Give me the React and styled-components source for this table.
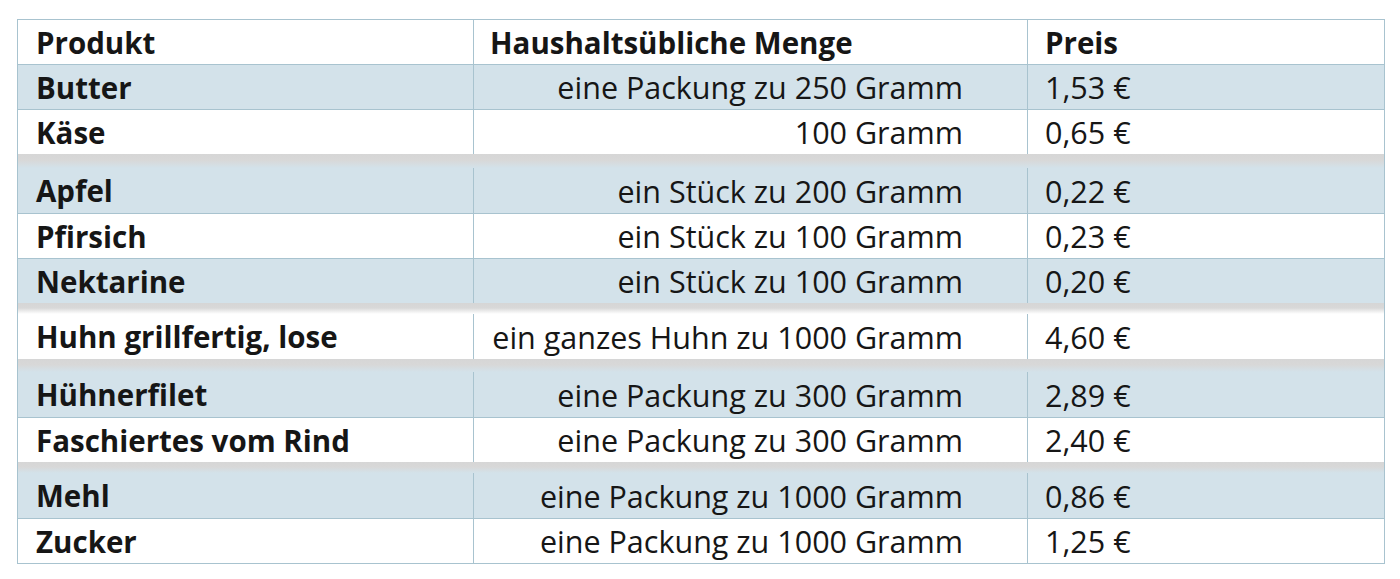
import React, { Fragment } from 'react';
import styled, { createGlobalStyle } from 'styled-components';

const COLORS = {
  BLUE: '#d3e2ea',
  WHITE: '#ffffff',
  LINE: '#a8c3cf',
  GAP: '#d6d6d6',
  TEXT: '#161616',
};

const GlobalStyle = createGlobalStyle`
  html, body {
    margin: 0;
    padding: 0;
    background: #ffffff;
  }
  body {
    font-family: "Open Sans", "Noto Sans", sans-serif;
    color: ${COLORS.TEXT};
  }
`

const Page = styled.div`
  padding: 19px 0 0 17px;
`
const Table = styled.div`
  width: 1368px;
  box-sizing: border-box;
  border: 1px solid ${COLORS.LINE};
  display: flex;
  flex-direction: column;
`
const Row = styled.div`
  display: grid;
  grid-template-columns: 455px 554px 1fr;
  height: ${(p) => (p.$head ? 44 : 45)}px;
  box-sizing: border-box;
  background: ${(p) => (p.$blue ? COLORS.BLUE : COLORS.WHITE)};
  border-top: ${(p) => (p.$ruled ? `1px solid ${COLORS.LINE}` : 'none')};
`
const Cell = styled.div`
  display: flex;
  align-items: center;
  justify-content: ${(p) => (p.$right ? 'flex-end' : 'flex-start')};
  padding: 2px ${(p) => (p.$right ? 64 : 0)}px 0 ${(p) => (p.$right ? 0 : p.$inset)}px;
  border-left: ${(p) => (p.$first ? 'none' : `1px solid ${COLORS.LINE}`)};
  font-size: ${(p) => (p.$bold ? 29.5 : 30.5)}px;
  font-weight: ${(p) => (p.$bold ? 700 : 400)};
  white-space: nowrap;
  line-height: 1.3;
`
const Gap = styled.div`
  height: ${(p) => p.$h}px;
  background: linear-gradient(
    ${COLORS.GAP} 0%,
    #d8d8d8 45%,
    ${(p) => (p.$blue ? COLORS.BLUE : COLORS.WHITE)} 100%
  );
`

const groups = [
  [
    ['Butter', 'eine Packung zu 250 Gramm', '1,53 €'],
    ['Käse', '100 Gramm', '0,65 €'],
  ],
  [
    ['Apfel', 'ein Stück zu 200 Gramm', '0,22 €'],
    ['Pfirsich', 'ein Stück zu 100 Gramm', '0,23 €'],
    ['Nektarine', 'ein Stück zu 100 Gramm', '0,20 €'],
  ],
  [
    ['Huhn grillfertig, lose', 'ein ganzes Huhn zu 1000 Gramm', '4,60 €'],
  ],
  [
    ['Hühnerfilet', 'eine Packung zu 300 Gramm', '2,89 €'],
    ['Faschiertes vom Rind', 'eine Packung zu 300 Gramm', '2,40 €'],
  ],
  [
    ['Mehl', 'eine Packung zu 1000 Gramm', '0,86 €'],
    ['Zucker', 'eine Packung zu 1000 Gramm', '1,25 €'],
  ],
];

// the gap above each group after the first
const gapHeights = [0, 14, 11, 13, 11];

const App = () => {
  let index = 0;
  const blueOf = (i) => i % 2 === 0;

  return (
    <Page>
      <GlobalStyle />
      <Table>
        <Row $head>
          <Cell $first $bold $inset={18}>Produkt</Cell>
          <Cell $bold $inset={16}>Haushaltsübliche Menge</Cell>
          <Cell $bold $inset={17}>Preis</Cell>
        </Row>
        {groups.map((group, g) => {
          const startIndex = index;
          index += group.length;
          // Huhn sits alone and stays white
          const tones = group.map((_, i) => (g === 2 ? false : blueOf(i)));
          return (
            <Fragment key={g}>
              {g > 0 && <Gap $h={gapHeights[g]} $blue={tones[0]} />}
              {group.map(([name, amount, price], i) => (
                <Row key={startIndex + i} $blue={tones[i]} $ruled={g === 0 || i > 0}>
                  <Cell $first $bold $inset={18}>{name}</Cell>
                  <Cell $right>{amount}</Cell>
                  <Cell $inset={17}>{price}</Cell>
                </Row>
              ))}
            </Fragment>
          );
        })}
      </Table>
    </Page>
  );
}

export default App
